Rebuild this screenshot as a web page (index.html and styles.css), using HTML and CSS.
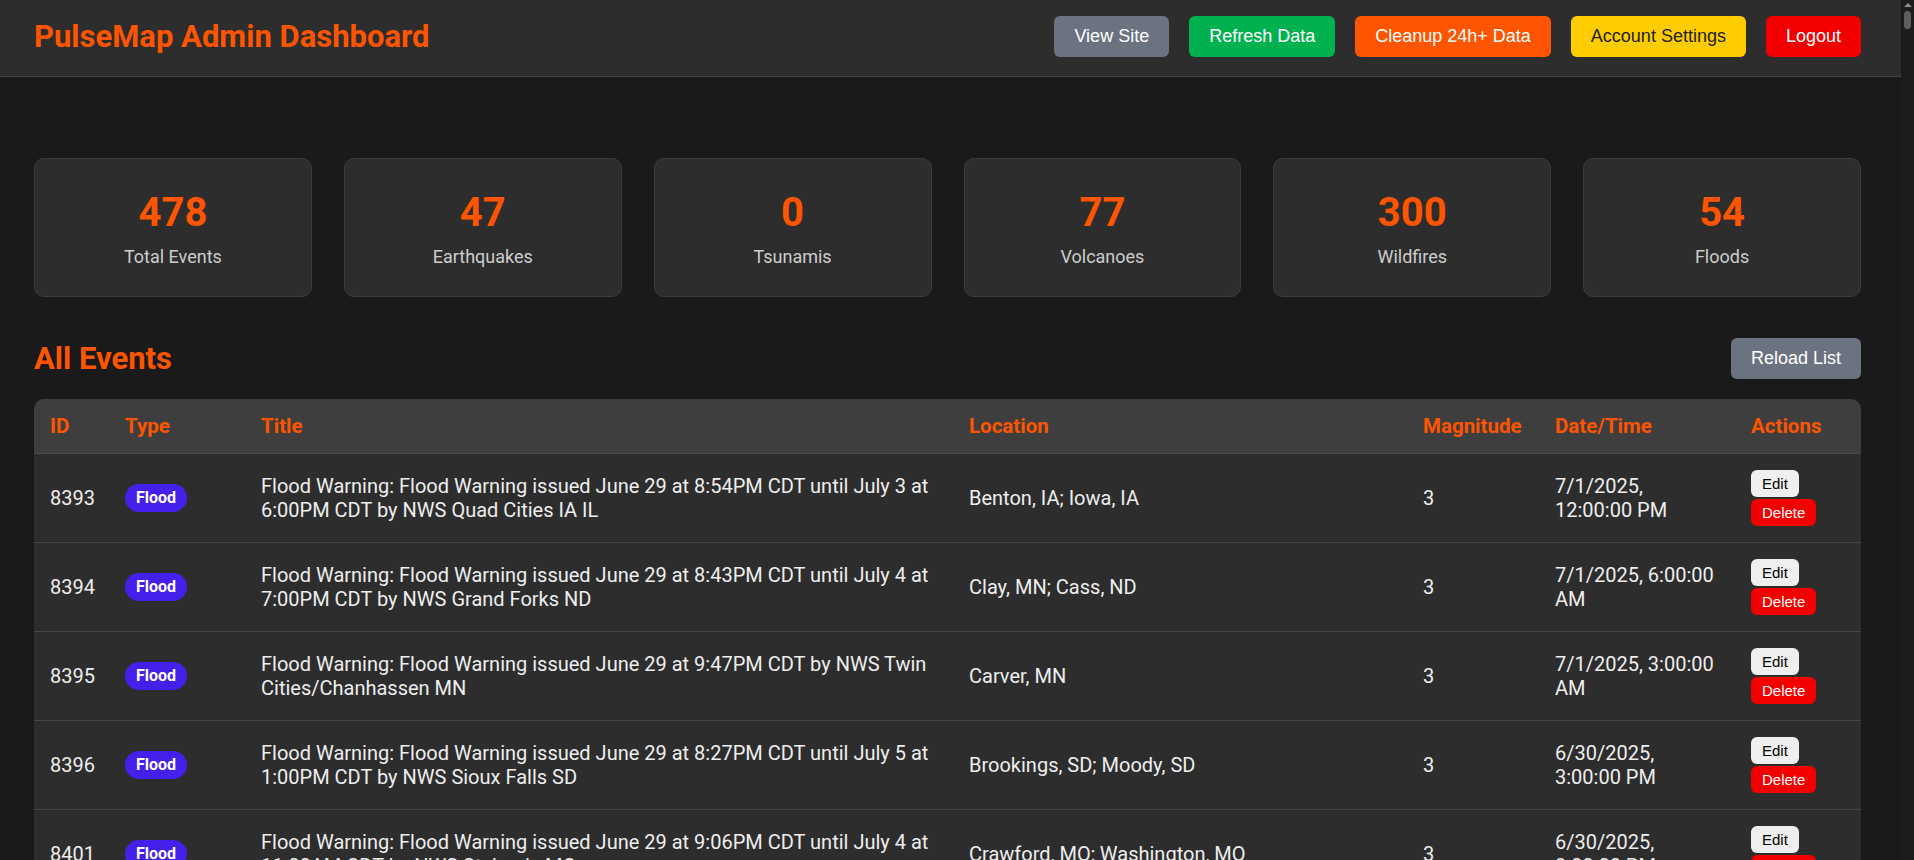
FILE: index.html
```html
<!DOCTYPE html>
<html lang="en">
<head>
<meta charset="utf-8">
<title>PulseMap Admin Dashboard</title>
<link rel="stylesheet" href="styles.css">
</head>
<body>
<div class="page">
<header class="topbar">
  <h1 class="brand">PulseMap Admin Dashboard</h1>
  <nav class="top-actions">
    <button class="btn btn-gray">View Site</button>
    <button class="btn btn-green">Refresh Data</button>
    <button class="btn btn-orange">Cleanup 24h+ Data</button>
    <button class="btn btn-yellow">Account Settings</button>
    <button class="btn btn-red">Logout</button>
  </nav>
</header>
<main class="content">
  <section class="stats">
    <div class="stat-card"><div class="stat-num">478</div><div class="stat-label">Total Events</div></div>
    <div class="stat-card"><div class="stat-num">47</div><div class="stat-label">Earthquakes</div></div>
    <div class="stat-card"><div class="stat-num">0</div><div class="stat-label">Tsunamis</div></div>
    <div class="stat-card"><div class="stat-num">77</div><div class="stat-label">Volcanoes</div></div>
    <div class="stat-card"><div class="stat-num">300</div><div class="stat-label">Wildfires</div></div>
    <div class="stat-card"><div class="stat-num">54</div><div class="stat-label">Floods</div></div>
  </section>
  <div class="section-head">
    <h2 class="section-title">All Events</h2>
    <button class="btn btn-gray">Reload List</button>
  </div>
  <div class="table-wrap">
    <table class="events">
      <colgroup>
        <col class="c-id"><col class="c-type"><col class="c-title"><col class="c-loc"><col class="c-mag"><col class="c-date"><col class="c-act">
      </colgroup>
      <thead>
        <tr><th>ID</th><th>Type</th><th>Title</th><th>Location</th><th>Magnitude</th><th>Date/Time</th><th>Actions</th></tr>
      </thead>
      <tbody>
        <tr>
          <td>8393</td><td><span class="badge">Flood</span></td>
          <td>Flood Warning: Flood Warning issued June 29 at 8:54PM CDT until July 3 at 6:00PM CDT by NWS Quad Cities IA IL</td>
          <td>Benton, IA; Iowa, IA</td><td>3</td><td>7/1/2025, 12:00:00 PM</td>
          <td><div class="row-actions"><button class="sbtn sbtn-edit">Edit</button><button class="sbtn sbtn-del">Delete</button></div></td>
        </tr>
        <tr>
          <td>8394</td><td><span class="badge">Flood</span></td>
          <td>Flood Warning: Flood Warning issued June 29 at 8:43PM CDT until July 4 at 7:00PM CDT by NWS Grand Forks ND</td>
          <td>Clay, MN; Cass, ND</td><td>3</td><td>7/1/2025, 6:00:00 AM</td>
          <td><div class="row-actions"><button class="sbtn sbtn-edit">Edit</button><button class="sbtn sbtn-del">Delete</button></div></td>
        </tr>
        <tr>
          <td>8395</td><td><span class="badge">Flood</span></td>
          <td>Flood Warning: Flood Warning issued June 29 at 9:47PM CDT by NWS Twin Cities/Chanhassen MN</td>
          <td>Carver, MN</td><td>3</td><td>7/1/2025, 3:00:00 AM</td>
          <td><div class="row-actions"><button class="sbtn sbtn-edit">Edit</button><button class="sbtn sbtn-del">Delete</button></div></td>
        </tr>
        <tr>
          <td>8396</td><td><span class="badge">Flood</span></td>
          <td>Flood Warning: Flood Warning issued June 29 at 8:27PM CDT until July 5 at 1:00PM CDT by NWS Sioux Falls SD</td>
          <td>Brookings, SD; Moody, SD</td><td>3</td><td>6/30/2025, 3:00:00 PM</td>
          <td><div class="row-actions"><button class="sbtn sbtn-edit">Edit</button><button class="sbtn sbtn-del">Delete</button></div></td>
        </tr>
        <tr>
          <td>8401</td><td><span class="badge">Flood</span></td>
          <td>Flood Warning: Flood Warning issued June 29 at 9:06PM CDT until July 4 at 11:00AM CDT by NWS St. Louis MO</td>
          <td>Crawford, MO; Washington, MO</td><td>3</td><td>6/30/2025, 3:00:00 PM</td>
          <td><div class="row-actions"><button class="sbtn sbtn-edit">Edit</button><button class="sbtn sbtn-del">Delete</button></div></td>
        </tr>
        <tr>
          <td>8402</td><td><span class="badge">Flood</span></td>
          <td>Flood Warning: Flood Warning issued June 29 at 7:58PM CDT until July 2 at 9:00AM CDT by NWS Des Moines IA</td>
          <td>Polk, IA; Story, IA</td><td>3</td><td>6/30/2025, 1:00:00 PM</td>
          <td><div class="row-actions"><button class="sbtn sbtn-edit">Edit</button><button class="sbtn sbtn-del">Delete</button></div></td>
        </tr>
      </tbody>
    </table>
  </div>
</main>
</div>
<div class="scrollbar" aria-hidden="true">
  <div class="sb-arrow"></div>
  <div class="sb-thumb"></div>
</div>
</body>
</html>
```
FILE: styles.css
```css
* {
  box-sizing: border-box;
}
body {
  margin: 0;
  display: flex;
  align-items: stretch;
  background: #1a1a1a;
  color: #eeeeee;
  font-family: Roboto, "Noto Sans", sans-serif;
}
.page {
  flex: 1;
  min-width: 0;
}
.scrollbar {
  width: 13px;
  flex: none;
  background: #1c1c1c;
  display: flex;
  flex-direction: column;
  align-items: center;
}
.sb-arrow {
  margin-top: 3px;
  width: 0;
  height: 0;
  border-left: 4px solid transparent;
  border-right: 4px solid transparent;
  border-bottom: 4px solid #8c8c8c;
}
.sb-thumb {
  margin-top: 4px;
  width: 7px;
  height: 18px;
  border-radius: 4px;
  background: #5e5e5e;
}
.topbar {
  height: 77px;
  background: #2d2d2d;
  border-bottom: 1px solid #454545;
  display: flex;
  align-items: center;
  justify-content: space-between;
  padding: 0 40px 3px 34px;
}
.brand {
  margin: 0;
  font-size: 31px;
  font-weight: 700;
  color: #ff5500;
}
.top-actions {
  display: flex;
  gap: 20px;
}
.btn {
  font-family: "Liberation Sans", Arial, sans-serif;
  font-size: 18px;
  line-height: 21px;
  padding: 10px 20px;
  border: none;
  border-radius: 6px;
  color: #ffffff;
  cursor: pointer;
}
.btn-gray { background: #6b7280; }
.btn-green { background: #00b14f; }
.btn-orange { background: #ff5500; }
.btn-yellow { background: #ffcc00; color: #222222; }
.btn-red { background: #f20000; }

.content {
  padding: 81px 40px 40px 34px;
}
.stats {
  display: grid;
  grid-template-columns: repeat(6, 1fr);
  gap: 32px;
  margin-bottom: 41px;
}
.stat-card {
  background: #2d2d2d;
  border: 1px solid #3c3c3c;
  border-radius: 10px;
  padding: 30px 16px 27px;
  text-align: center;
}
.stat-num {
  font-size: 40px;
  line-height: 48px;
  font-weight: 700;
  color: #ff5500;
  margin-bottom: 8px;
}
.stat-label {
  font-size: 18px;
  line-height: 24px;
  color: #cccccc;
}
.section-head {
  display: flex;
  align-items: center;
  justify-content: space-between;
  margin-bottom: 20px;
}
.section-title {
  margin: 0;
  font-size: 31px;
  font-weight: 700;
  color: #ff5500;
}
.table-wrap {
  background: #2d2d2d;
  border-radius: 10px;
  overflow: hidden;
}
.events {
  width: 100%;
  border-collapse: collapse;
  table-layout: fixed;
}
.c-id { width: 75px; }
.c-type { width: 136px; }
.c-title { width: 708px; }
.c-loc { width: 454px; }
.c-mag { width: 132px; }
.c-date { width: 196px; }
.c-act { width: 126px; }
.events th {
  background: #3e3e3e;
  color: #ff5500;
  font-size: 20.5px;
  line-height: 22px;
  font-weight: 700;
  text-align: left;
  padding: 16px;
  border-bottom: 1px solid #4a4a4a;
}
.events td {
  font-size: 20px;
  line-height: 24px;
  color: #eeeeee;
  padding: 16px;
  vertical-align: middle;
  border-bottom: 1px solid #464646;
}
.badge {
  display: inline-block;
  background: #4520eb;
  color: #ffffff;
  font-size: 16px;
  line-height: 18px;
  font-weight: 700;
  padding: 5px 11px;
  border-radius: 14px;
  vertical-align: middle;
}
.row-actions {
  display: flex;
  flex-direction: column;
  align-items: flex-start;
  gap: 2px;
}
.sbtn {
  font-family: "Liberation Sans", Arial, sans-serif;
  font-size: 15px;
  line-height: 17px;
  padding: 5px 11px;
  border: none;
  border-radius: 6px;
  cursor: pointer;
}
.sbtn-edit { background: #efefef; color: #000000; }
.sbtn-del { background: #f20000; color: #ffffff; }
```
